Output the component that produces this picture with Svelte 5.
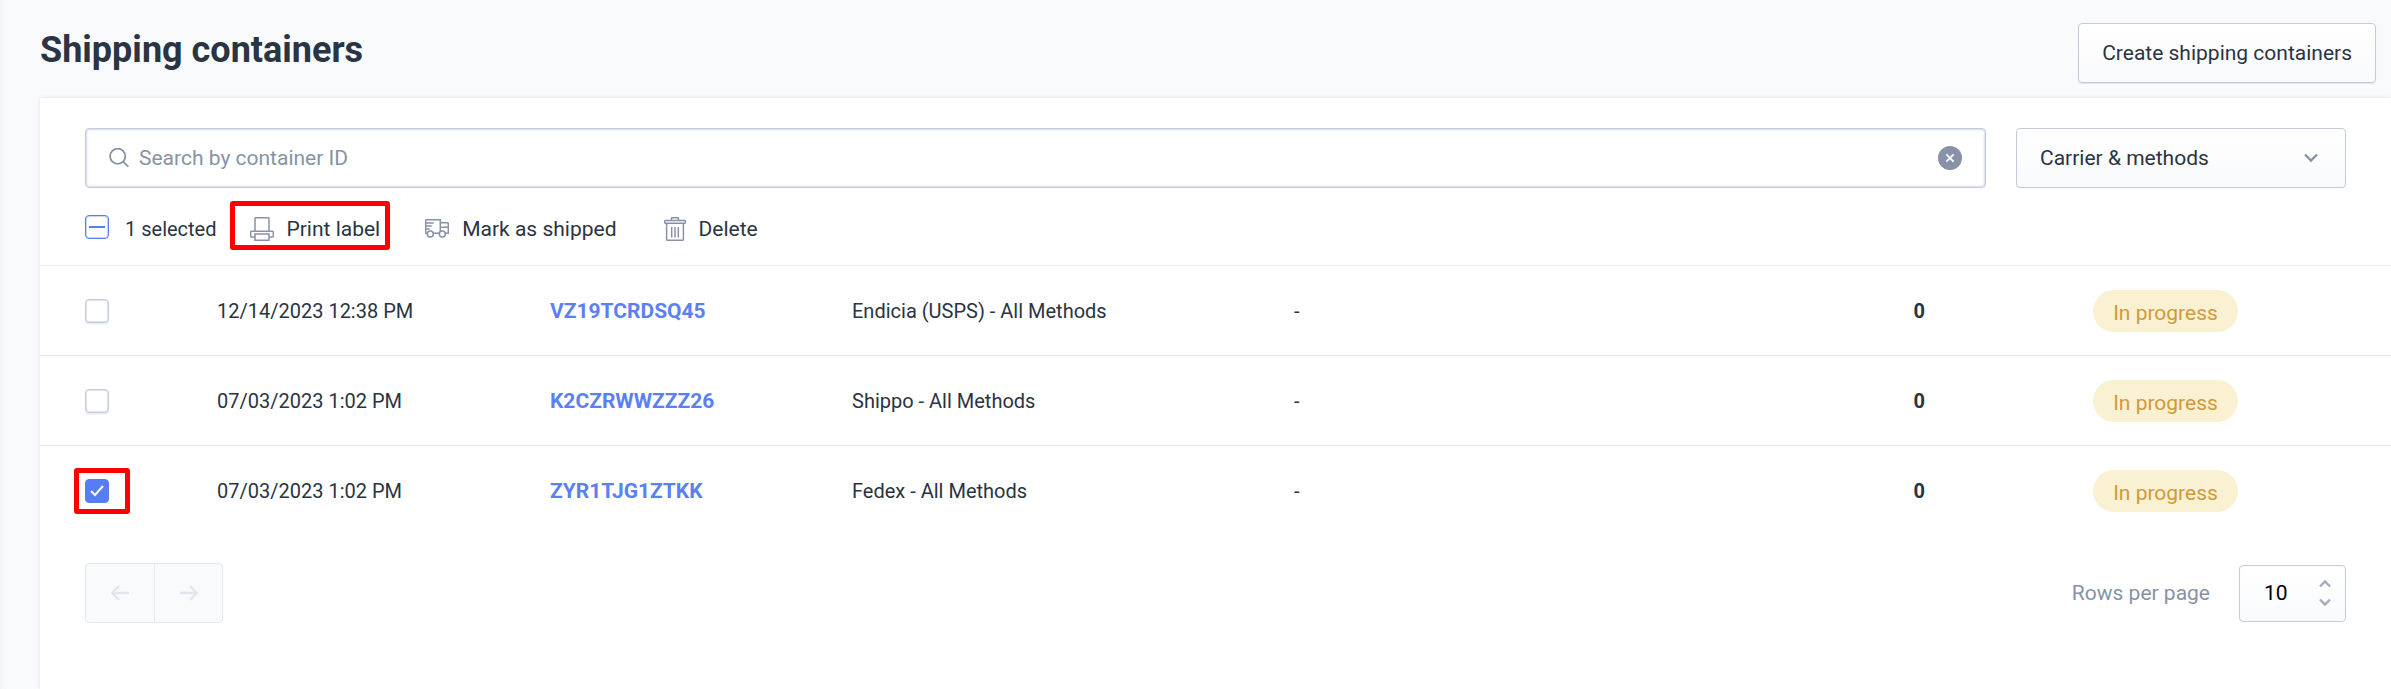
<script>
  let search = $state("");
  let containers = $state([
    { id: "VZ19TCRDSQ45", created: "12/14/2023 12:38 PM", carrier: "Endicia (USPS) - All Methods", tracking: "-", packages: 0, status: "In progress", selected: false },
    { id: "K2CZRWWZZZ26", created: "07/03/2023 1:02 PM", carrier: "Shippo - All Methods", tracking: "-", packages: 0, status: "In progress", selected: false },
    { id: "ZYR1TJG1ZTKK", created: "07/03/2023 1:02 PM", carrier: "Fedex - All Methods", tracking: "-", packages: 0, status: "In progress", selected: true },
  ]);

  let count = $derived(containers.filter((c) => c.selected).length);
  let all = $derived(count === containers.length);

  function toggleAll() {
    const next = !all;
    containers.forEach((c) => (c.selected = next));
  }
</script>

<div class="page">
  <header>
    <h1>Shipping containers</h1>
    <button class="create" type="button">Create shipping containers</button>
  </header>

  <main>
    <div class="filters">
      <label class="search">
        <svg width="20" height="20" viewBox="0 0 20 20" aria-hidden="true">
          <circle cx="8.7" cy="8.3" r="7.6" />
          <path d="M14.2 13.7L19.3 18.6" />
        </svg>
        <input type="text" aria-label="Search by container ID" placeholder="Search by container ID" bind:value={search} />
        <button class="clear" type="button" aria-label="Clear search" onclick={() => search = ""}>
          <svg width="24" height="24" viewBox="0 0 24 24" aria-hidden="true">
            <path d="M8.4 8.4l7.2 7.2M15.6 8.4l-7.2 7.2" />
          </svg>
        </button>
      </label>
      <div class="select carrier">
        <select aria-label="Carrier and methods">
          <option>Carrier &amp; methods</option>
        </select>
        <svg width="14" height="10" viewBox="0 0 14 10" aria-hidden="true">
          <path d="M1 1.5l6 6 6-6" />
        </svg>
      </div>
    </div>

    <div class="bulk">
      <label class="count">
        <input type="checkbox" checked={all} indeterminate={count > 0 && !all} onchange={toggleAll} />
        {count} selected
      </label>
      <button class="print marked" type="button">
        <svg width="24" height="24" viewBox="0 0 24 24" aria-hidden="true">
          <path d="M5 14V1.6q0-.9.9-.9h12.2q.9 0 .9.9V14" />
          <path d="M5 20H1.7q-1 0-1-1v-3.8q0-1 1-1h20.6q1 0 1 1V19q0 1-1 1H19" />
          <path d="M5 17h14v6.300H5z" />
        </svg>
        Print label
      </button>
      <button class="ship" type="button">
        <svg width="24" height="24" viewBox="0 0 24 24" aria-hidden="true">
          <path d="M2.3 16.200H.7V3.700q0-1 1-1h13.600v12.500M.7 6h8M.7 9h6M.7 12h4M15.300 5.700h7q1 0 1 1v9.500H20.300M15.300 10.300h8" />
          <circle cx="5.300" cy="17" r="3" />
          <circle cx="17.300" cy="17" r="3" />
          <path d="M8.300 16.200h6" />
        </svg>
        Mark as shipped
      </button>
      <button class="delete" type="button">
        <svg width="22" height="24" viewBox="0 0 22 24" aria-hidden="true">
          <path d="M7.500 3.300V1.500q0-.8.8-.8h5.400q.8 0 .8.800v1.800" />
          <path d="M1.500 3.400h19q.8 0 .8.800v1.300q0 .8-.8.800h-19q-.8 0-.8-.8V4.200q0-.8.8-.8z" />
          <path d="M2.600 6.300v16q0 1 1 1h14.800q1 0 1-1v-16" />
          <path d="M7.700 10v10.500M11 10v10.500M14.300 10v10.500" />
        </svg>
        Delete
      </button>
    </div>

    <table>
      <colgroup>
        <col class="col-check" />
        <col class="col-created" />
        <col class="col-id" />
        <col class="col-carrier" />
        <col />
        <col class="col-status" />
      </colgroup>
      <tbody>
        {#each containers as item (item.id)}
          <tr>
            <td class="check">
              <span class="box" class:marked={item.selected}>
                <input type="checkbox" aria-label={`Select ${item.id}`} bind:checked={item.selected} />
              </span>
            </td>
            <td>{item.created}</td>
            <td class="id"><a href={`#${item.id}`}>{item.id}</a></td>
            <td>{item.carrier}</td>
            <td>
              <div class="packages">
                <span>{item.tracking}</span>
                <strong>{item.packages}</strong>
              </div>
            </td>
            <td class="status"><span class="pill">{item.status}</span></td>
          </tr>
        {/each}
      </tbody>
    </table>

    <footer>
      <div class="pager">
        <button type="button" aria-label="Previous page" disabled>
          <svg width="18" height="16" viewBox="0 0 18 16" aria-hidden="true">
            <path d="M18 8H1.500M8 1L1.200 8 8 15" />
          </svg>
        </button>
        <button type="button" aria-label="Next page" disabled>
          <svg width="18" height="16" viewBox="0 0 18 16" aria-hidden="true">
            <path d="M0 8h16.500M10 1l6.800 7L10 15" />
          </svg>
        </button>
      </div>
      <div class="per-page">
        <label for="rows">Rows per page</label>
        <div class="select rows">
          <select id="rows">
            <option>10</option>
          </select>
          <svg width="12" height="28" viewBox="0 0 12 28" aria-hidden="true">
            <path d="M1 7.500l5-5 5 5M1 20.500l5 5 5-5" />
          </svg>
        </div>
      </div>
    </footer>
  </main>
</div>

<style>
  :global(body) {
    margin: 0;
    background: #f9fafc;
  }

  .page {
    box-sizing: border-box;
    display: flex;
    flex-direction: column;
    min-height: 100vh;
    padding-left: 40px;
    overflow: hidden;
    color: #2a3442;
    font-family: Roboto, "Liberation Sans", sans-serif;
    font-size: 21px;
    line-height: 30px;
    box-shadow: inset 4px 0 4px -3px #eef0f5;
  }

  button, input, select {
    box-sizing: border-box;
    margin: 0;
    color: inherit;
    font: inherit;
  }

  button {
    padding: 0;
    border: 0;
    background: none;
    cursor: pointer;
  }

  svg {
    flex: none;
    fill: none;
    stroke: #8892a6;
    stroke-width: 1.5;
  }

  header {
    display: flex;
    align-items: flex-start;
    justify-content: space-between;
    padding: 23px 15px 15px 0;
  }

  h1 {
    margin: 0;
    font-size: 36px;
    font-weight: 700;
    line-height: 54px;
  }

  .create {
    height: 60px;
    padding: 0 23px;
    border: 1px solid #c3cadf;
    border-radius: 4px;
    background: linear-gradient(#fff, #f9fafc);
    box-shadow: 0 1px 1px #dfe3ee;
  }

  main {
    flex: 1;
    background: #fff;
    box-shadow: 0 0 4px rgba(60, 60, 90, 0.12);
  }

  .filters {
    display: flex;
    gap: 30px;
    padding: 30px 45px 0;
  }

  .search {
    box-sizing: border-box;
    display: flex;
    flex: 1;
    align-items: center;
    gap: 10px;
    height: 60px;
    padding: 0 23px;
    border: 1px solid #c3cadb;
    border-radius: 4px;
    box-shadow: inset 0 0 2px 1px #d5daE7;
  }

  .search > svg {
    stroke-width: 1.8;
  }

  .search input {
    flex: 1;
    min-width: 0;
    padding: 0;
    border: 0;
    outline: 0;
    background: none;
  }

  .search input::placeholder {
    color: #8892a6;
    opacity: 1;
  }

  .clear {
    display: flex;
    border-radius: 50%;
    background: #8892a6;
  }

  .clear svg {
    stroke: #fff;
    stroke-width: 1.8;
  }

  .select {
    display: grid;
    align-items: center;
  }

  .select select, .select svg {
    grid-area: 1 / 1;
  }

  .select select {
    width: 100%;
    border: 1px solid #c3cadb;
    border-radius: 4px;
    background: linear-gradient(#fff, #f9fafc);
    appearance: none;
  }

  .select svg {
    justify-self: end;
    stroke-width: 2.4;
    pointer-events: none;
  }

  .carrier {
    width: 330px;
  }

  .carrier select {
    height: 60px;
    padding: 0 50px 0 23px;
  }

  .carrier svg {
    margin-right: 28px;
  }

  .bulk {
    display: flex;
    align-items: flex-start;
    padding: 13px 45px 15px;
    border-bottom: 1px solid #e6e9f0;
  }

  .bulk button {
    display: flex;
    align-items: center;
    gap: 13px;
    height: 49px;
    padding-top: 6px;
  }

  .count {
    display: flex;
    align-items: flex-start;
    gap: 16px;
    margin-top: 14px;
    font-size: 20px;
    line-height: 28px;
  }

  .bulk .print {
    margin: 0 35px 0 13px;
    padding: 6px 10px 0 20px;
  }

  .bulk .ship {
    margin-right: 47px;
  }

  .marked {
    position: relative;
  }

  .marked::after {
    position: absolute;
    inset: 0;
    border: 5px solid #f00;
    border-radius: 3px;
    content: "";
    pointer-events: none;
  }

  input[type="checkbox"] {
    display: block;
    width: 24px;
    height: 24px;
    border: 1px solid #c3cadb;
    border-radius: 4px;
    background: #fff center no-repeat;
    box-shadow: inset 0 0 1px 1px #dfe3ec, 0 2px 1px #eef0f5;
    appearance: none;
  }

  input[type="checkbox"]:checked {
    border-color: #567df4;
    background-color: #567df4;
    background-image: url("data:image/svg+xml,%3Csvg xmlns='http://www.w3.org/2000/svg' width='14' height='12'%3E%3Cpath d='M1 6l4 4 8-9' fill='none' stroke='white' stroke-width='2'/%3E%3C/svg%3E");
    box-shadow: none;
  }

  input[type="checkbox"]:indeterminate {
    border-color: #567df4;
    background-image: linear-gradient(#567df4, #567df4);
    background-size: 16px 2px;
    box-shadow: inset 0 0 1px 1px #c4d2fc;
  }

  table {
    width: 100%;
    border-collapse: collapse;
    font-size: 20px;
    table-layout: fixed;
  }

  .col-check {
    width: 162px;
  }

  .col-created {
    width: 333px;
  }

  .col-id {
    width: 302px;
  }

  .col-carrier {
    width: 442px;
  }

  .col-status {
    width: 451px;
  }

  td {
    height: 89px;
    padding: 0 15px;
    border-bottom: 1px solid #e6e9f0;
  }

  tr:last-child td {
    border-bottom: 0;
  }

  td.check {
    padding-left: 34px;
  }

  .box {
    display: block;
    width: 35px;
    padding: 11px 10px 11px 11px;
  }

  .id, .status {
    font-size: 21px;
  }

  a {
    color: #5b7ff5;
    font-weight: 700;
    text-decoration: none;
  }

  .packages {
    display: flex;
    justify-content: space-between;
  }

  .status {
    text-align: center;
  }

  .pill {
    display: inline-block;
    padding: 8px 20px 4px;
    border-radius: 21px;
    background: #faf0d2;
    color: #d09a3c;
  }

  footer {
    display: flex;
    align-items: center;
    justify-content: space-between;
    padding: 28px 45px 45px;
  }

  .pager {
    display: flex;
    border: 1px solid #e6e9f0;
    border-radius: 4px;
    background: #f9fafc;
  }

  .pager button {
    display: grid;
    place-items: center;
    width: 68px;
    height: 58px;
  }

  .pager button + button {
    border-left: 1px solid #e6e9f0;
  }

  .pager svg {
    stroke: #e2e5ed;
    stroke-width: 2.4;
  }

  .per-page {
    display: flex;
    align-items: center;
    gap: 29px;
    color: #8892a6;
  }

  .rows {
    width: 107px;
  }

  .rows select {
    height: 57px;
    padding: 0 40px 0 24px;
    color: #000;
  }

  .rows svg {
    margin-right: 15px;
    stroke: #a3abbd;
  }
</style>
